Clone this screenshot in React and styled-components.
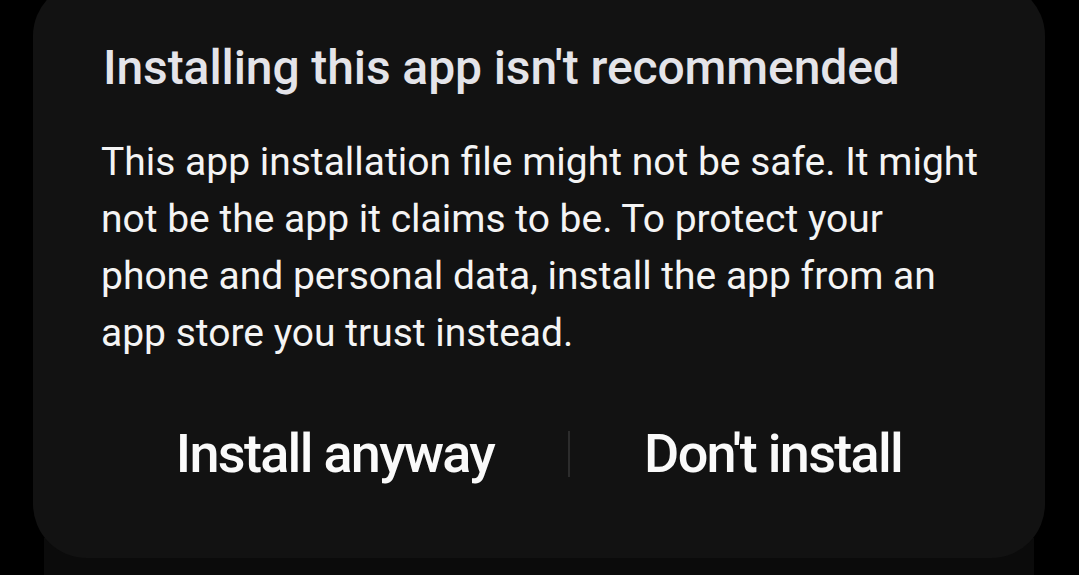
import React from 'react';
import styled, { createGlobalStyle } from 'styled-components';

const GlobalStyle = createGlobalStyle`
  html, body {
    margin: 0;
    padding: 0;
    background: #000;
    overflow: hidden;
  }
  body {
    font-family: Roboto, 'Noto Sans', sans-serif;
  }
`;

const Screen = styled.div`
  width: 1079px;
  height: 575px;
  background: #000;
  display: flex;
  flex-direction: column;
  overflow: hidden;
`;

const Dialog = styled.div`
  position: relative;
  z-index: 1;
  margin: -18px 34px 0 33px;
  height: 576px;
  box-sizing: border-box;
  background: #121212;
  border-radius: 54px;
  padding: 58px 40px 0 70px;
  display: flex;
  flex-direction: column;
  flex-shrink: 0;
`;

const Title = styled.h1`
  margin: 0;
  font-size: 48px;
  font-weight: 500;
  line-height: 56px;
  color: #e4e4e9;
  letter-spacing: -0.1px;
  white-space: nowrap;
`;

const Message = styled.p`
  margin: 38px 0 0 -2px;
  font-size: 39px;
  font-weight: 400;
  line-height: 57px;
  color: #f4f4f4;
  white-space: nowrap;
`;

const Actions = styled.div`
  display: flex;
  align-items: center;
  justify-content: center;
  margin: 62px -40px 0 -70px;
`;

const ActionButton = styled.button`
  background: none;
  border: 0;
  padding: 0 74px;
  font-family: Roboto, 'Noto Sans', sans-serif;
  font-size: 54px;
  font-weight: 500;
  line-height: 60px;
  color: #fafafa;
  letter-spacing: -1.7px;
  cursor: pointer;
`;

const Divider = styled.span`
  width: 2px;
  height: 46px;
  background: #2c2c2c;
`;

const BackCard = styled.div`
  margin: -20px 45px 0 44px;
  flex: 1;
  background: #0b0b0b;
`;

export default function App() {
  return (
    <Screen>
      <GlobalStyle />
      <Dialog>
        <Title>Installing this app isn't recommended</Title>
        <Message>
          This app installation file might not be safe. It might
          <br />
          not be the app it claims to be. To protect your
          <br />
          phone and personal data, install the app from an
          <br />
          app store you trust instead.
        </Message>
        <Actions>
          <ActionButton>Install anyway</ActionButton>
          <Divider />
          <ActionButton>Don't install</ActionButton>
        </Actions>
      </Dialog>
      <BackCard />
    </Screen>
  );
}
